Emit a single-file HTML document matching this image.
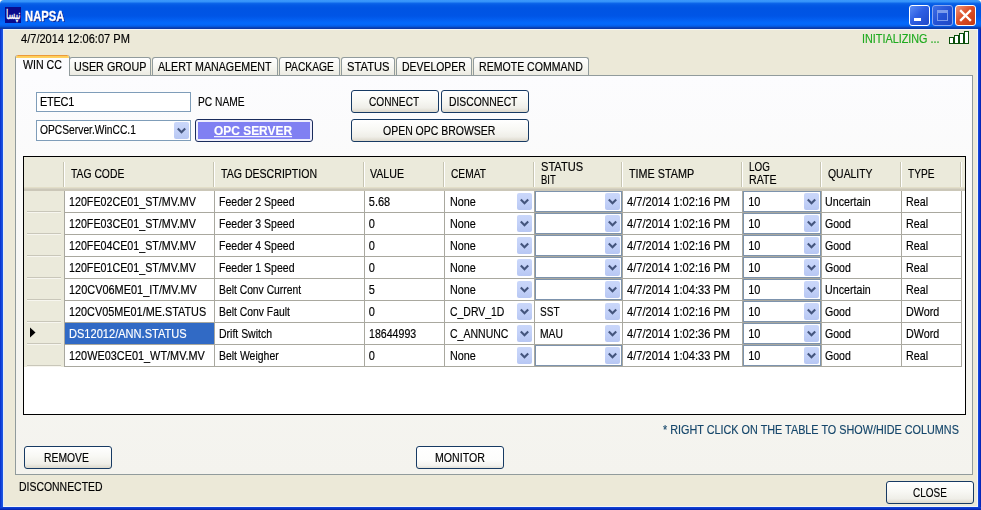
<!DOCTYPE html>
<html><head><meta charset="utf-8"><title>NAPSA</title>
<style>
html,body{margin:0;padding:0;}
body{width:981px;height:510px;overflow:hidden;position:relative;background:#fff;font-family:"Liberation Sans", sans-serif;font-size:11px;}
.a{position:absolute;box-sizing:content-box;}
.t{position:absolute;white-space:pre;font-family:"Liberation Sans", sans-serif;-webkit-text-stroke:0.15px;}
</style></head><body>
<div class="a" style="left:0px;top:0px;width:981px;height:510px;background:#ece9d8;border-radius:4px 4px 0 0;overflow:hidden;"></div>
<div class="a" style="left:0px;top:0px;width:981px;height:29px;border-radius:4px 4px 0 0;background:linear-gradient(to bottom,#3c98fb 0px,#3391f9 2px,#0f68ea 3px,#045ae5 5px,#0054e3 8px,#0055e6 16px,#0360f2 20px,#0469fb 23px,#0465f6 25px,#0557dc 26.5px,#0a44bb 27.5px,#0a359f 29px);"></div>
<div class="a" style="left:0px;top:29px;width:3px;height:481px;background:linear-gradient(to right,#0a2ec8 0,#0d3ed8 1px,#1a52e0 2px,#2058e0 3px);"></div>
<div class="a" style="left:978px;top:29px;width:3px;height:481px;background:linear-gradient(to left,#061fa8 0,#0a30c8 1px,#0f40d8 2px,#1a4ede 3px);"></div>
<div class="a" style="left:0px;top:507px;width:981px;height:3px;background:linear-gradient(to bottom,#1448d8 0,#0a34c8 1.5px,#0622a8 3px);"></div>
<div class="a" style="left:3px;top:29px;width:973px;height:476px;border:1px solid #f3f5f8;border-left-color:#e3ecfb;"></div>
<div class="a" style="left:5px;top:7px;width:16px;height:16px;background:#0a0a8c;"><span style="position:absolute;left:1.2px;top:2.54px;white-space:pre;color:#fff;-webkit-text-stroke:0.25px #fff;font:10px/12px 'DejaVu Sans',sans-serif;transform-origin:0 9.46px;transform:scale(0.81,1.28);">نپسا</span></div>
<div class="a" style="left:909px;top:5px;width:19px;height:19px;border:1px solid #fff;border-radius:3px;background:linear-gradient(135deg,#5b8cf5 0%,#2e5fe3 45%,#1f48c8 100%);"><div style="position:absolute;left:4px;top:12px;width:7px;height:3px;background:#fff"></div></div>
<div class="a" style="left:932px;top:5px;width:19px;height:19px;border:1px solid #8aa8f0;border-radius:3px;background:linear-gradient(135deg,#3f6fe6 0%,#2553d6 50%,#1d47c6 100%);"><div style="position:absolute;left:4px;top:4px;width:9px;height:7px;border:1px solid #7d9cec;border-top:3px solid #7d9cec"></div></div>
<div class="a" style="left:955px;top:5px;width:19px;height:19px;border:1px solid #fff;border-radius:3px;background:linear-gradient(135deg,#f0957a 0%,#dc4f28 45%,#c63810 100%);"><svg width="19" height="19" style="position:absolute;left:0;top:0"><path d="M5 5 L14 14 M14 5 L5 14" stroke="#fff" stroke-width="2.4" stroke-linecap="square"/></svg></div>
<div class="a" style="left:949px;top:37px;width:3px;height:5px;border:1px solid #0b4f0b;background:#fff;"></div>
<div class="a" style="left:954px;top:35px;width:3px;height:7px;border:1px solid #0b4f0b;background:#fff;"></div>
<div class="a" style="left:959px;top:33px;width:3px;height:9px;border:1px solid #0b4f0b;background:#fff;"></div>
<div class="a" style="left:964px;top:31px;width:3px;height:11px;border:1px solid #0b4f0b;background:#fff;"></div>
<div class="a" style="left:15px;top:75px;width:956px;height:398px;border:1px solid #919b9c;background:linear-gradient(to bottom,#fcfcfe 0%,#fafaf9 30%,#f6f6f2 60%,#f4f3ee 100%);"></div>
<div class="a" style="left:69px;top:57px;width:80px;height:17px;border:1px solid #919b9c;border-bottom:none;border-radius:3px 3px 0 0;background:linear-gradient(to bottom,#ffffff 0%,#f7f7f2 50%,#ecebe2 100%);"></div>
<div class="a" style="left:152px;top:57px;width:124px;height:17px;border:1px solid #919b9c;border-bottom:none;border-radius:3px 3px 0 0;background:linear-gradient(to bottom,#ffffff 0%,#f7f7f2 50%,#ecebe2 100%);"></div>
<div class="a" style="left:279px;top:57px;width:59px;height:17px;border:1px solid #919b9c;border-bottom:none;border-radius:3px 3px 0 0;background:linear-gradient(to bottom,#ffffff 0%,#f7f7f2 50%,#ecebe2 100%);"></div>
<div class="a" style="left:341px;top:57px;width:52px;height:17px;border:1px solid #919b9c;border-bottom:none;border-radius:3px 3px 0 0;background:linear-gradient(to bottom,#ffffff 0%,#f7f7f2 50%,#ecebe2 100%);"></div>
<div class="a" style="left:396px;top:57px;width:74px;height:17px;border:1px solid #919b9c;border-bottom:none;border-radius:3px 3px 0 0;background:linear-gradient(to bottom,#ffffff 0%,#f7f7f2 50%,#ecebe2 100%);"></div>
<div class="a" style="left:473px;top:57px;width:114px;height:17px;border:1px solid #919b9c;border-bottom:none;border-radius:3px 3px 0 0;background:linear-gradient(to bottom,#ffffff 0%,#f7f7f2 50%,#ecebe2 100%);"></div>
<div class="a" style="left:15px;top:55px;width:53px;height:21px;border:1px solid #919b9c;border-bottom:none;border-top:none;border-radius:3px 3px 0 0;background:#fcfcfe;overflow:hidden;"><div style="position:absolute;left:-1px;top:0;width:55px;height:3px;background:linear-gradient(to bottom,#eb9a3c 0,#eb9a3c 1px,#ffcc55 1px,#ffd366 3px);border-radius:3px 3px 0 0"></div></div>
<div class="a" style="left:36px;top:92px;width:153px;height:18px;border:1px solid #7f9db9;background:#fff;"></div>
<div class="a" style="left:36px;top:120px;width:153px;height:19px;border:1px solid #7f9db9;background:#fff;"></div>
<div class="a" style="left:174px;top:122px;width:15px;height:17px;border-radius:2px;background:linear-gradient(to bottom,#cad7fa 0%,#c3d1f8 50%,#b7c7f3 100%);"><svg width="15" height="17" style="position:absolute;left:0;top:0"><path d="M3.8 6.6000000000000005 L7.5 10.3 L11.2 6.6000000000000005" fill="none" stroke="#44557d" stroke-width="2.1"/></svg></div>
<div class="a" style="left:351px;top:90px;width:86px;height:21px;border:1px solid #173a63;border-radius:3px;background:linear-gradient(to bottom,#ffffff 0%,#f8f8f4 45%,#efeee8 80%,#dcd8cc 100%);"></div>
<div class="a" style="left:441px;top:90px;width:86px;height:21px;border:1px solid #173a63;border-radius:3px;background:linear-gradient(to bottom,#ffffff 0%,#f8f8f4 45%,#efeee8 80%,#dcd8cc 100%);"></div>
<div class="a" style="left:351px;top:119px;width:176px;height:21px;border:1px solid #173a63;border-radius:3px;background:linear-gradient(to bottom,#ffffff 0%,#f8f8f4 45%,#efeee8 80%,#dcd8cc 100%);"></div>
<div class="a" style="left:24px;top:446px;width:86px;height:21px;border:1px solid #173a63;border-radius:3px;background:linear-gradient(to bottom,#ffffff 0%,#f8f8f4 45%,#efeee8 80%,#dcd8cc 100%);"></div>
<div class="a" style="left:416px;top:446px;width:86px;height:21px;border:1px solid #173a63;border-radius:3px;background:linear-gradient(to bottom,#ffffff 0%,#fdfdfc 60%,#f3f2ee 88%,#e2dfd6 100%);"></div>
<div class="a" style="left:886px;top:481px;width:86px;height:21px;border:1px solid #173a63;border-radius:3px;background:linear-gradient(to bottom,#ffffff 0%,#f8f8f4 45%,#efeee8 80%,#dcd8cc 100%);"></div>
<div class="a" style="left:195px;top:119px;width:116px;height:21px;border:1px solid #1a2c5c;border-radius:3px;background:#eeeefc;"><div style="position:absolute;left:2px;top:2px;width:112px;height:17px;background:#8080f2"></div></div>
<div class="a" style="left:23px;top:156px;width:941px;height:257px;border:1px solid #000;background:#fff;"></div>
<div class="a" style="left:24px;top:157px;width:941px;height:34px;background:linear-gradient(to bottom,#ebeadb 0,#ebeadb 30px,#e2dec8 30px,#e2dec8 31px,#d6d2c2 31px,#d6d2c2 32px,#cbc7b8 32px,#cbc7b8 34px);"></div>
<div class="a" style="left:63px;top:162px;width:1px;height:25px;background:#c7c5b2;"></div>
<div class="a" style="left:64px;top:162px;width:1px;height:25px;background:#ffffff;"></div>
<div class="a" style="left:213px;top:162px;width:1px;height:25px;background:#c7c5b2;"></div>
<div class="a" style="left:214px;top:162px;width:1px;height:25px;background:#ffffff;"></div>
<div class="a" style="left:363px;top:162px;width:1px;height:25px;background:#c7c5b2;"></div>
<div class="a" style="left:364px;top:162px;width:1px;height:25px;background:#ffffff;"></div>
<div class="a" style="left:443px;top:162px;width:1px;height:25px;background:#c7c5b2;"></div>
<div class="a" style="left:444px;top:162px;width:1px;height:25px;background:#ffffff;"></div>
<div class="a" style="left:533px;top:162px;width:1px;height:25px;background:#c7c5b2;"></div>
<div class="a" style="left:534px;top:162px;width:1px;height:25px;background:#ffffff;"></div>
<div class="a" style="left:621px;top:162px;width:1px;height:25px;background:#c7c5b2;"></div>
<div class="a" style="left:622px;top:162px;width:1px;height:25px;background:#ffffff;"></div>
<div class="a" style="left:741px;top:162px;width:1px;height:25px;background:#c7c5b2;"></div>
<div class="a" style="left:742px;top:162px;width:1px;height:25px;background:#ffffff;"></div>
<div class="a" style="left:820px;top:162px;width:1px;height:25px;background:#c7c5b2;"></div>
<div class="a" style="left:821px;top:162px;width:1px;height:25px;background:#ffffff;"></div>
<div class="a" style="left:900px;top:162px;width:1px;height:25px;background:#c7c5b2;"></div>
<div class="a" style="left:901px;top:162px;width:1px;height:25px;background:#ffffff;"></div>
<div class="a" style="left:960px;top:162px;width:1px;height:25px;background:#c7c5b2;"></div>
<div class="a" style="left:961px;top:162px;width:1px;height:25px;background:#ffffff;"></div>
<div class="a" style="left:24px;top:191px;width:40px;height:176px;background:#ebeadb;"></div>
<div class="a" style="left:64px;top:191px;width:1px;height:176px;background:#a9a89f;"></div>
<div class="a" style="left:27px;top:211px;width:34px;height:1px;background:#c9c7ba;"></div>
<div class="a" style="left:27px;top:212px;width:34px;height:1px;background:#f7f6ef;"></div>
<div class="a" style="left:64px;top:212px;width:898px;height:1px;background:#a9a89f;"></div>
<div class="a" style="left:27px;top:233px;width:34px;height:1px;background:#c9c7ba;"></div>
<div class="a" style="left:27px;top:234px;width:34px;height:1px;background:#f7f6ef;"></div>
<div class="a" style="left:64px;top:234px;width:898px;height:1px;background:#a9a89f;"></div>
<div class="a" style="left:27px;top:255px;width:34px;height:1px;background:#c9c7ba;"></div>
<div class="a" style="left:27px;top:256px;width:34px;height:1px;background:#f7f6ef;"></div>
<div class="a" style="left:64px;top:256px;width:898px;height:1px;background:#a9a89f;"></div>
<div class="a" style="left:27px;top:277px;width:34px;height:1px;background:#c9c7ba;"></div>
<div class="a" style="left:27px;top:278px;width:34px;height:1px;background:#f7f6ef;"></div>
<div class="a" style="left:64px;top:278px;width:898px;height:1px;background:#a9a89f;"></div>
<div class="a" style="left:27px;top:299px;width:34px;height:1px;background:#c9c7ba;"></div>
<div class="a" style="left:27px;top:300px;width:34px;height:1px;background:#f7f6ef;"></div>
<div class="a" style="left:64px;top:300px;width:898px;height:1px;background:#a9a89f;"></div>
<div class="a" style="left:27px;top:321px;width:34px;height:1px;background:#c9c7ba;"></div>
<div class="a" style="left:27px;top:322px;width:34px;height:1px;background:#f7f6ef;"></div>
<div class="a" style="left:64px;top:322px;width:898px;height:1px;background:#a9a89f;"></div>
<div class="a" style="left:27px;top:343px;width:34px;height:1px;background:#c9c7ba;"></div>
<div class="a" style="left:27px;top:344px;width:34px;height:1px;background:#f7f6ef;"></div>
<div class="a" style="left:64px;top:344px;width:898px;height:1px;background:#a9a89f;"></div>
<div class="a" style="left:27px;top:365px;width:34px;height:1px;background:#c9c7ba;"></div>
<div class="a" style="left:27px;top:366px;width:34px;height:1px;background:#f7f6ef;"></div>
<div class="a" style="left:64px;top:366px;width:898px;height:1px;background:#a9a89f;"></div>
<div class="a" style="left:214px;top:191px;width:1px;height:176px;background:#a9a89f;"></div>
<div class="a" style="left:364px;top:191px;width:1px;height:176px;background:#a9a89f;"></div>
<div class="a" style="left:444px;top:191px;width:1px;height:176px;background:#a9a89f;"></div>
<div class="a" style="left:534px;top:191px;width:1px;height:176px;background:#a9a89f;"></div>
<div class="a" style="left:622px;top:191px;width:1px;height:176px;background:#a9a89f;"></div>
<div class="a" style="left:742px;top:191px;width:1px;height:176px;background:#a9a89f;"></div>
<div class="a" style="left:821px;top:191px;width:1px;height:176px;background:#a9a89f;"></div>
<div class="a" style="left:901px;top:191px;width:1px;height:176px;background:#a9a89f;"></div>
<div class="a" style="left:961px;top:191px;width:1px;height:176px;background:#a9a89f;"></div>
<div class="a" style="left:65px;top:323px;width:149px;height:21px;background:#316ac5;"></div>
<svg class="a" style="left:30px;top:327px" width="6" height="11"><path d="M0 0.5 L5.5 5.5 L0 10.5 Z" fill="#000"/></svg>
<div class="a" style="left:517px;top:193px;width:15px;height:17px;border-radius:2px;background:linear-gradient(to bottom,#cad7fa 0%,#c3d1f8 50%,#b7c7f3 100%);"><svg width="15" height="17" style="position:absolute;left:0;top:0"><path d="M3.8 6.6000000000000005 L7.5 10.3 L11.2 6.6000000000000005" fill="none" stroke="#44557d" stroke-width="2.1"/></svg></div>
<div class="a" style="left:535px;top:191px;width:85px;height:19px;border:1px solid #7d93ad;background:#fff;"></div>
<div class="a" style="left:605px;top:193px;width:15px;height:17px;border-radius:2px;background:linear-gradient(to bottom,#cad7fa 0%,#c3d1f8 50%,#b7c7f3 100%);"><svg width="15" height="17" style="position:absolute;left:0;top:0"><path d="M3.8 6.6000000000000005 L7.5 10.3 L11.2 6.6000000000000005" fill="none" stroke="#44557d" stroke-width="2.1"/></svg></div>
<div class="a" style="left:743px;top:191px;width:76px;height:19px;border:1px solid #7d93ad;background:#fff;"></div>
<div class="a" style="left:804px;top:193px;width:15px;height:17px;border-radius:2px;background:linear-gradient(to bottom,#cad7fa 0%,#c3d1f8 50%,#b7c7f3 100%);"><svg width="15" height="17" style="position:absolute;left:0;top:0"><path d="M3.8 6.6000000000000005 L7.5 10.3 L11.2 6.6000000000000005" fill="none" stroke="#44557d" stroke-width="2.1"/></svg></div>
<div class="a" style="left:517px;top:215px;width:15px;height:17px;border-radius:2px;background:linear-gradient(to bottom,#cad7fa 0%,#c3d1f8 50%,#b7c7f3 100%);"><svg width="15" height="17" style="position:absolute;left:0;top:0"><path d="M3.8 6.6000000000000005 L7.5 10.3 L11.2 6.6000000000000005" fill="none" stroke="#44557d" stroke-width="2.1"/></svg></div>
<div class="a" style="left:535px;top:213px;width:85px;height:19px;border:1px solid #7d93ad;background:#fff;"></div>
<div class="a" style="left:605px;top:215px;width:15px;height:17px;border-radius:2px;background:linear-gradient(to bottom,#cad7fa 0%,#c3d1f8 50%,#b7c7f3 100%);"><svg width="15" height="17" style="position:absolute;left:0;top:0"><path d="M3.8 6.6000000000000005 L7.5 10.3 L11.2 6.6000000000000005" fill="none" stroke="#44557d" stroke-width="2.1"/></svg></div>
<div class="a" style="left:743px;top:213px;width:76px;height:19px;border:1px solid #7d93ad;background:#fff;"></div>
<div class="a" style="left:804px;top:215px;width:15px;height:17px;border-radius:2px;background:linear-gradient(to bottom,#cad7fa 0%,#c3d1f8 50%,#b7c7f3 100%);"><svg width="15" height="17" style="position:absolute;left:0;top:0"><path d="M3.8 6.6000000000000005 L7.5 10.3 L11.2 6.6000000000000005" fill="none" stroke="#44557d" stroke-width="2.1"/></svg></div>
<div class="a" style="left:517px;top:237px;width:15px;height:17px;border-radius:2px;background:linear-gradient(to bottom,#cad7fa 0%,#c3d1f8 50%,#b7c7f3 100%);"><svg width="15" height="17" style="position:absolute;left:0;top:0"><path d="M3.8 6.6000000000000005 L7.5 10.3 L11.2 6.6000000000000005" fill="none" stroke="#44557d" stroke-width="2.1"/></svg></div>
<div class="a" style="left:535px;top:235px;width:85px;height:19px;border:1px solid #7d93ad;background:#fff;"></div>
<div class="a" style="left:605px;top:237px;width:15px;height:17px;border-radius:2px;background:linear-gradient(to bottom,#cad7fa 0%,#c3d1f8 50%,#b7c7f3 100%);"><svg width="15" height="17" style="position:absolute;left:0;top:0"><path d="M3.8 6.6000000000000005 L7.5 10.3 L11.2 6.6000000000000005" fill="none" stroke="#44557d" stroke-width="2.1"/></svg></div>
<div class="a" style="left:743px;top:235px;width:76px;height:19px;border:1px solid #7d93ad;background:#fff;"></div>
<div class="a" style="left:804px;top:237px;width:15px;height:17px;border-radius:2px;background:linear-gradient(to bottom,#cad7fa 0%,#c3d1f8 50%,#b7c7f3 100%);"><svg width="15" height="17" style="position:absolute;left:0;top:0"><path d="M3.8 6.6000000000000005 L7.5 10.3 L11.2 6.6000000000000005" fill="none" stroke="#44557d" stroke-width="2.1"/></svg></div>
<div class="a" style="left:517px;top:259px;width:15px;height:17px;border-radius:2px;background:linear-gradient(to bottom,#cad7fa 0%,#c3d1f8 50%,#b7c7f3 100%);"><svg width="15" height="17" style="position:absolute;left:0;top:0"><path d="M3.8 6.6000000000000005 L7.5 10.3 L11.2 6.6000000000000005" fill="none" stroke="#44557d" stroke-width="2.1"/></svg></div>
<div class="a" style="left:535px;top:257px;width:85px;height:19px;border:1px solid #7d93ad;background:#fff;"></div>
<div class="a" style="left:605px;top:259px;width:15px;height:17px;border-radius:2px;background:linear-gradient(to bottom,#cad7fa 0%,#c3d1f8 50%,#b7c7f3 100%);"><svg width="15" height="17" style="position:absolute;left:0;top:0"><path d="M3.8 6.6000000000000005 L7.5 10.3 L11.2 6.6000000000000005" fill="none" stroke="#44557d" stroke-width="2.1"/></svg></div>
<div class="a" style="left:743px;top:257px;width:76px;height:19px;border:1px solid #7d93ad;background:#fff;"></div>
<div class="a" style="left:804px;top:259px;width:15px;height:17px;border-radius:2px;background:linear-gradient(to bottom,#cad7fa 0%,#c3d1f8 50%,#b7c7f3 100%);"><svg width="15" height="17" style="position:absolute;left:0;top:0"><path d="M3.8 6.6000000000000005 L7.5 10.3 L11.2 6.6000000000000005" fill="none" stroke="#44557d" stroke-width="2.1"/></svg></div>
<div class="a" style="left:517px;top:281px;width:15px;height:17px;border-radius:2px;background:linear-gradient(to bottom,#cad7fa 0%,#c3d1f8 50%,#b7c7f3 100%);"><svg width="15" height="17" style="position:absolute;left:0;top:0"><path d="M3.8 6.6000000000000005 L7.5 10.3 L11.2 6.6000000000000005" fill="none" stroke="#44557d" stroke-width="2.1"/></svg></div>
<div class="a" style="left:535px;top:279px;width:85px;height:19px;border:1px solid #7d93ad;background:#fff;"></div>
<div class="a" style="left:605px;top:281px;width:15px;height:17px;border-radius:2px;background:linear-gradient(to bottom,#cad7fa 0%,#c3d1f8 50%,#b7c7f3 100%);"><svg width="15" height="17" style="position:absolute;left:0;top:0"><path d="M3.8 6.6000000000000005 L7.5 10.3 L11.2 6.6000000000000005" fill="none" stroke="#44557d" stroke-width="2.1"/></svg></div>
<div class="a" style="left:743px;top:279px;width:76px;height:19px;border:1px solid #7d93ad;background:#fff;"></div>
<div class="a" style="left:804px;top:281px;width:15px;height:17px;border-radius:2px;background:linear-gradient(to bottom,#cad7fa 0%,#c3d1f8 50%,#b7c7f3 100%);"><svg width="15" height="17" style="position:absolute;left:0;top:0"><path d="M3.8 6.6000000000000005 L7.5 10.3 L11.2 6.6000000000000005" fill="none" stroke="#44557d" stroke-width="2.1"/></svg></div>
<div class="a" style="left:517px;top:303px;width:15px;height:17px;border-radius:2px;background:linear-gradient(to bottom,#cad7fa 0%,#c3d1f8 50%,#b7c7f3 100%);"><svg width="15" height="17" style="position:absolute;left:0;top:0"><path d="M3.8 6.6000000000000005 L7.5 10.3 L11.2 6.6000000000000005" fill="none" stroke="#44557d" stroke-width="2.1"/></svg></div>
<div class="a" style="left:605px;top:303px;width:15px;height:17px;border-radius:2px;background:linear-gradient(to bottom,#cad7fa 0%,#c3d1f8 50%,#b7c7f3 100%);"><svg width="15" height="17" style="position:absolute;left:0;top:0"><path d="M3.8 6.6000000000000005 L7.5 10.3 L11.2 6.6000000000000005" fill="none" stroke="#44557d" stroke-width="2.1"/></svg></div>
<div class="a" style="left:743px;top:301px;width:76px;height:19px;border:1px solid #7d93ad;background:#fff;"></div>
<div class="a" style="left:804px;top:303px;width:15px;height:17px;border-radius:2px;background:linear-gradient(to bottom,#cad7fa 0%,#c3d1f8 50%,#b7c7f3 100%);"><svg width="15" height="17" style="position:absolute;left:0;top:0"><path d="M3.8 6.6000000000000005 L7.5 10.3 L11.2 6.6000000000000005" fill="none" stroke="#44557d" stroke-width="2.1"/></svg></div>
<div class="a" style="left:517px;top:325px;width:15px;height:17px;border-radius:2px;background:linear-gradient(to bottom,#cad7fa 0%,#c3d1f8 50%,#b7c7f3 100%);"><svg width="15" height="17" style="position:absolute;left:0;top:0"><path d="M3.8 6.6000000000000005 L7.5 10.3 L11.2 6.6000000000000005" fill="none" stroke="#44557d" stroke-width="2.1"/></svg></div>
<div class="a" style="left:605px;top:325px;width:15px;height:17px;border-radius:2px;background:linear-gradient(to bottom,#cad7fa 0%,#c3d1f8 50%,#b7c7f3 100%);"><svg width="15" height="17" style="position:absolute;left:0;top:0"><path d="M3.8 6.6000000000000005 L7.5 10.3 L11.2 6.6000000000000005" fill="none" stroke="#44557d" stroke-width="2.1"/></svg></div>
<div class="a" style="left:743px;top:323px;width:76px;height:19px;border:1px solid #7d93ad;background:#fff;"></div>
<div class="a" style="left:804px;top:325px;width:15px;height:17px;border-radius:2px;background:linear-gradient(to bottom,#cad7fa 0%,#c3d1f8 50%,#b7c7f3 100%);"><svg width="15" height="17" style="position:absolute;left:0;top:0"><path d="M3.8 6.6000000000000005 L7.5 10.3 L11.2 6.6000000000000005" fill="none" stroke="#44557d" stroke-width="2.1"/></svg></div>
<div class="a" style="left:517px;top:347px;width:15px;height:17px;border-radius:2px;background:linear-gradient(to bottom,#cad7fa 0%,#c3d1f8 50%,#b7c7f3 100%);"><svg width="15" height="17" style="position:absolute;left:0;top:0"><path d="M3.8 6.6000000000000005 L7.5 10.3 L11.2 6.6000000000000005" fill="none" stroke="#44557d" stroke-width="2.1"/></svg></div>
<div class="a" style="left:535px;top:345px;width:85px;height:19px;border:1px solid #7d93ad;background:#fff;"></div>
<div class="a" style="left:605px;top:347px;width:15px;height:17px;border-radius:2px;background:linear-gradient(to bottom,#cad7fa 0%,#c3d1f8 50%,#b7c7f3 100%);"><svg width="15" height="17" style="position:absolute;left:0;top:0"><path d="M3.8 6.6000000000000005 L7.5 10.3 L11.2 6.6000000000000005" fill="none" stroke="#44557d" stroke-width="2.1"/></svg></div>
<div class="a" style="left:743px;top:345px;width:76px;height:19px;border:1px solid #7d93ad;background:#fff;"></div>
<div class="a" style="left:804px;top:347px;width:15px;height:17px;border-radius:2px;background:linear-gradient(to bottom,#cad7fa 0%,#c3d1f8 50%,#b7c7f3 100%);"><svg width="15" height="17" style="position:absolute;left:0;top:0"><path d="M3.8 6.6000000000000005 L7.5 10.3 L11.2 6.6000000000000005" fill="none" stroke="#44557d" stroke-width="2.1"/></svg></div>
<div id="txt" style="position:absolute;left:0;top:0;width:981px;height:510px;will-change:transform;">
<span class="t" style="left:24.50px;top:7.90px;font-size:14px;line-height:16px;color:#fff;letter-spacing:0.000px;transform-origin:0 13.1px;transform:scale(0.806,1.0);font-weight:700;text-shadow:1px 1px 0 #0a1883;-webkit-text-stroke:0.3px #fff;">NAPSA</span>
<span class="t" style="left:21.00px;top:32.70px;font-size:11px;line-height:13px;color:#000;letter-spacing:0.000px;transform-origin:0 10.3px;transform:scale(1.006,1.13);">4/7/2014 12:06:07 PM</span>
<span class="t" style="left:861.52px;top:32.70px;font-size:11px;line-height:13px;color:#1faa1f;letter-spacing:0.000px;transform-origin:0 10.3px;transform:scale(0.983,1.13);">INITIALIZING ...</span>
<span class="t" style="left:23.00px;top:58.70px;font-size:11px;line-height:13px;color:#000;letter-spacing:0.000px;transform-origin:0 10.3px;transform:scale(0.966,1.13);">WIN CC</span>
<span class="t" style="left:74.40px;top:60.70px;font-size:11px;line-height:13px;color:#000;letter-spacing:0.000px;transform-origin:0 10.3px;transform:scale(0.978,1.13);">USER GROUP</span>
<span class="t" style="left:158.00px;top:60.70px;font-size:11px;line-height:13px;color:#000;letter-spacing:0.000px;transform-origin:0 10.3px;transform:scale(0.971,1.13);">ALERT MANAGEMENT</span>
<span class="t" style="left:285.00px;top:60.70px;font-size:11px;line-height:13px;color:#000;letter-spacing:0.000px;transform-origin:0 10.3px;transform:scale(0.932,1.13);">PACKAGE</span>
<span class="t" style="left:347.30px;top:60.70px;font-size:11px;line-height:13px;color:#000;letter-spacing:0.000px;transform-origin:0 10.3px;transform:scale(1.019,1.13);">STATUS</span>
<span class="t" style="left:402.40px;top:60.70px;font-size:11px;line-height:13px;color:#000;letter-spacing:0.000px;transform-origin:0 10.3px;transform:scale(0.948,1.13);">DEVELOPER</span>
<span class="t" style="left:479.40px;top:60.70px;font-size:11px;line-height:13px;color:#000;letter-spacing:0.000px;transform-origin:0 10.3px;transform:scale(0.960,1.13);">REMOTE COMMAND</span>
<span class="t" style="left:39.90px;top:95.70px;font-size:11px;line-height:13px;color:#000;letter-spacing:-0.250px;transform-origin:0 10.3px;transform:scale(1.000,1.13);">ETEC1</span>
<span class="t" style="left:197.70px;top:95.70px;font-size:11px;line-height:13px;color:#000;letter-spacing:0.000px;transform-origin:0 10.3px;transform:scale(0.930,1.13);">PC NAME</span>
<span class="t" style="left:40.00px;top:123.70px;font-size:11px;line-height:13px;color:#000;letter-spacing:0.000px;transform-origin:0 10.3px;transform:scale(0.934,1.13);">OPCServer.WinCC.1</span>
<span class="t" style="left:214.40px;top:124.70px;font-size:11px;line-height:13px;color:#fff;letter-spacing:0.000px;transform-origin:0 10.3px;transform:scale(1.085,1.13);font-weight:700;text-decoration:underline;">OPC SERVER</span>
<span class="t" style="left:368.70px;top:95.70px;font-size:11px;line-height:13px;color:#000;letter-spacing:0.000px;transform-origin:0 10.3px;transform:scale(0.922,1.13);">CONNECT</span>
<span class="t" style="left:449.30px;top:95.70px;font-size:11px;line-height:13px;color:#000;letter-spacing:0.000px;transform-origin:0 10.3px;transform:scale(0.941,1.13);">DISCONNECT</span>
<span class="t" style="left:382.60px;top:124.70px;font-size:11px;line-height:13px;color:#000;letter-spacing:0.000px;transform-origin:0 10.3px;transform:scale(0.953,1.13);">OPEN OPC BROWSER</span>
<span class="t" style="left:663.00px;top:423.70px;font-size:11px;line-height:13px;color:#15466a;letter-spacing:0.000px;transform-origin:0 10.3px;transform:scale(0.984,1.13);">* RIGHT CLICK ON THE TABLE TO SHOW/HIDE COLUMNS</span>
<span class="t" style="left:44.40px;top:451.70px;font-size:11px;line-height:13px;color:#000;letter-spacing:0.000px;transform-origin:0 10.3px;transform:scale(0.942,1.13);">REMOVE</span>
<span class="t" style="left:434.60px;top:451.70px;font-size:11px;line-height:13px;color:#000;letter-spacing:0.000px;transform-origin:0 10.3px;transform:scale(0.965,1.13);">MONITOR</span>
<span class="t" style="left:912.50px;top:486.70px;font-size:11px;line-height:13px;color:#000;letter-spacing:0.000px;transform-origin:0 10.3px;transform:scale(0.907,1.13);">CLOSE</span>
<span class="t" style="left:19.40px;top:480.70px;font-size:11px;line-height:13px;color:#000;letter-spacing:0.000px;transform-origin:0 10.3px;transform:scale(0.949,1.13);">DISCONNECTED</span>
<span class="t" style="left:70.80px;top:167.70px;font-size:11px;line-height:13px;color:#000;letter-spacing:0.000px;transform-origin:0 10.3px;transform:scale(0.941,1.13);">TAG CODE</span>
<span class="t" style="left:221.00px;top:167.70px;font-size:11px;line-height:13px;color:#000;letter-spacing:0.000px;transform-origin:0 10.3px;transform:scale(0.961,1.13);">TAG DESCRIPTION</span>
<span class="t" style="left:370.20px;top:167.70px;font-size:11px;line-height:13px;color:#000;letter-spacing:0.000px;transform-origin:0 10.3px;transform:scale(0.965,1.13);">VALUE</span>
<span class="t" style="left:450.60px;top:167.70px;font-size:11px;line-height:13px;color:#000;letter-spacing:0.000px;transform-origin:0 10.3px;transform:scale(0.927,1.13);">CEMAT</span>
<span class="t" style="left:540.50px;top:160.70px;font-size:11px;line-height:13px;color:#000;letter-spacing:0.000px;transform-origin:0 10.3px;transform:scale(1.009,1.13);">STATUS</span>
<span class="t" style="left:540.80px;top:173.70px;font-size:11px;line-height:13px;color:#000;letter-spacing:0.000px;transform-origin:0 10.3px;transform:scale(0.862,1.13);">BIT</span>
<span class="t" style="left:629.00px;top:167.70px;font-size:11px;line-height:13px;color:#000;letter-spacing:0.000px;transform-origin:0 10.3px;transform:scale(0.981,1.13);">TIME STAMP</span>
<span class="t" style="left:748.80px;top:160.70px;font-size:11px;line-height:13px;color:#000;letter-spacing:0.000px;transform-origin:0 10.3px;transform:scale(0.895,1.13);">LOG</span>
<span class="t" style="left:748.80px;top:173.70px;font-size:11px;line-height:13px;color:#000;letter-spacing:0.000px;transform-origin:0 10.3px;transform:scale(0.965,1.13);">RATE</span>
<span class="t" style="left:827.50px;top:167.70px;font-size:11px;line-height:13px;color:#000;letter-spacing:0.000px;transform-origin:0 10.3px;transform:scale(0.947,1.13);">QUALITY</span>
<span class="t" style="left:907.80px;top:167.70px;font-size:11px;line-height:13px;color:#000;letter-spacing:0.000px;transform-origin:0 10.3px;transform:scale(0.919,1.13);">TYPE</span>
<span class="t" style="left:69.00px;top:195.70px;font-size:11px;line-height:13px;color:#000;letter-spacing:0.000px;transform-origin:0 10.3px;transform:scale(0.973,1.13);">120FE02CE01_ST/MV.MV</span>
<span class="t" style="left:218.80px;top:195.70px;font-size:11px;line-height:13px;color:#000;letter-spacing:0.000px;transform-origin:0 10.3px;transform:scale(0.957,1.13);">Feeder 2 Speed</span>
<span class="t" style="left:368.80px;top:195.70px;font-size:11px;line-height:13px;color:#000;letter-spacing:0.000px;transform-origin:0 10.3px;transform:scale(1.000,1.13);">5.68</span>
<span class="t" style="left:449.50px;top:195.70px;font-size:11px;line-height:13px;color:#000;letter-spacing:0.000px;transform-origin:0 10.3px;transform:scale(0.982,1.13);">None</span>
<span class="t" style="left:626.50px;top:195.70px;font-size:11px;line-height:13px;color:#000;letter-spacing:0.000px;transform-origin:0 10.3px;transform:scale(1.009,1.13);">4/7/2014 1:02:16 PM</span>
<span class="t" style="left:748.20px;top:195.70px;font-size:11px;line-height:13px;color:#000;letter-spacing:0.000px;transform-origin:0 10.3px;transform:scale(1.000,1.13);">10</span>
<span class="t" style="left:825.40px;top:195.70px;font-size:11px;line-height:13px;color:#000;letter-spacing:0.000px;transform-origin:0 10.3px;transform:scale(0.971,1.13);">Uncertain</span>
<span class="t" style="left:905.80px;top:195.70px;font-size:11px;line-height:13px;color:#000;letter-spacing:0.000px;transform-origin:0 10.3px;transform:scale(0.974,1.13);">Real</span>
<span class="t" style="left:69.00px;top:217.70px;font-size:11px;line-height:13px;color:#000;letter-spacing:0.000px;transform-origin:0 10.3px;transform:scale(0.973,1.13);">120FE03CE01_ST/MV.MV</span>
<span class="t" style="left:218.80px;top:217.70px;font-size:11px;line-height:13px;color:#000;letter-spacing:0.000px;transform-origin:0 10.3px;transform:scale(0.957,1.13);">Feeder 3 Speed</span>
<span class="t" style="left:368.80px;top:217.70px;font-size:11px;line-height:13px;color:#000;letter-spacing:0.000px;transform-origin:0 10.3px;transform:scale(1.000,1.13);">0</span>
<span class="t" style="left:449.50px;top:217.70px;font-size:11px;line-height:13px;color:#000;letter-spacing:0.000px;transform-origin:0 10.3px;transform:scale(0.982,1.13);">None</span>
<span class="t" style="left:626.50px;top:217.70px;font-size:11px;line-height:13px;color:#000;letter-spacing:0.000px;transform-origin:0 10.3px;transform:scale(1.009,1.13);">4/7/2014 1:02:16 PM</span>
<span class="t" style="left:748.20px;top:217.70px;font-size:11px;line-height:13px;color:#000;letter-spacing:0.000px;transform-origin:0 10.3px;transform:scale(1.000,1.13);">10</span>
<span class="t" style="left:825.40px;top:217.70px;font-size:11px;line-height:13px;color:#000;letter-spacing:0.000px;transform-origin:0 10.3px;transform:scale(0.959,1.13);">Good</span>
<span class="t" style="left:905.80px;top:217.70px;font-size:11px;line-height:13px;color:#000;letter-spacing:0.000px;transform-origin:0 10.3px;transform:scale(0.974,1.13);">Real</span>
<span class="t" style="left:69.00px;top:239.70px;font-size:11px;line-height:13px;color:#000;letter-spacing:0.000px;transform-origin:0 10.3px;transform:scale(0.973,1.13);">120FE04CE01_ST/MV.MV</span>
<span class="t" style="left:218.80px;top:239.70px;font-size:11px;line-height:13px;color:#000;letter-spacing:0.000px;transform-origin:0 10.3px;transform:scale(0.957,1.13);">Feeder 4 Speed</span>
<span class="t" style="left:368.80px;top:239.70px;font-size:11px;line-height:13px;color:#000;letter-spacing:0.000px;transform-origin:0 10.3px;transform:scale(1.000,1.13);">0</span>
<span class="t" style="left:449.50px;top:239.70px;font-size:11px;line-height:13px;color:#000;letter-spacing:0.000px;transform-origin:0 10.3px;transform:scale(0.982,1.13);">None</span>
<span class="t" style="left:626.50px;top:239.70px;font-size:11px;line-height:13px;color:#000;letter-spacing:0.000px;transform-origin:0 10.3px;transform:scale(1.009,1.13);">4/7/2014 1:02:16 PM</span>
<span class="t" style="left:748.20px;top:239.70px;font-size:11px;line-height:13px;color:#000;letter-spacing:0.000px;transform-origin:0 10.3px;transform:scale(1.000,1.13);">10</span>
<span class="t" style="left:825.40px;top:239.70px;font-size:11px;line-height:13px;color:#000;letter-spacing:0.000px;transform-origin:0 10.3px;transform:scale(0.959,1.13);">Good</span>
<span class="t" style="left:905.80px;top:239.70px;font-size:11px;line-height:13px;color:#000;letter-spacing:0.000px;transform-origin:0 10.3px;transform:scale(0.974,1.13);">Real</span>
<span class="t" style="left:69.00px;top:261.70px;font-size:11px;line-height:13px;color:#000;letter-spacing:0.000px;transform-origin:0 10.3px;transform:scale(0.973,1.13);">120FE01CE01_ST/MV.MV</span>
<span class="t" style="left:218.80px;top:261.70px;font-size:11px;line-height:13px;color:#000;letter-spacing:0.000px;transform-origin:0 10.3px;transform:scale(0.957,1.13);">Feeder 1 Speed</span>
<span class="t" style="left:368.80px;top:261.70px;font-size:11px;line-height:13px;color:#000;letter-spacing:0.000px;transform-origin:0 10.3px;transform:scale(1.000,1.13);">0</span>
<span class="t" style="left:449.50px;top:261.70px;font-size:11px;line-height:13px;color:#000;letter-spacing:0.000px;transform-origin:0 10.3px;transform:scale(0.982,1.13);">None</span>
<span class="t" style="left:626.50px;top:261.70px;font-size:11px;line-height:13px;color:#000;letter-spacing:0.000px;transform-origin:0 10.3px;transform:scale(1.009,1.13);">4/7/2014 1:02:16 PM</span>
<span class="t" style="left:748.20px;top:261.70px;font-size:11px;line-height:13px;color:#000;letter-spacing:0.000px;transform-origin:0 10.3px;transform:scale(1.000,1.13);">10</span>
<span class="t" style="left:825.40px;top:261.70px;font-size:11px;line-height:13px;color:#000;letter-spacing:0.000px;transform-origin:0 10.3px;transform:scale(0.959,1.13);">Good</span>
<span class="t" style="left:905.80px;top:261.70px;font-size:11px;line-height:13px;color:#000;letter-spacing:0.000px;transform-origin:0 10.3px;transform:scale(0.974,1.13);">Real</span>
<span class="t" style="left:69.00px;top:283.70px;font-size:11px;line-height:13px;color:#000;letter-spacing:0.000px;transform-origin:0 10.3px;transform:scale(0.994,1.13);">120CV06ME01_IT/MV.MV</span>
<span class="t" style="left:218.80px;top:283.70px;font-size:11px;line-height:13px;color:#000;letter-spacing:0.000px;transform-origin:0 10.3px;transform:scale(0.939,1.13);">Belt Conv Current</span>
<span class="t" style="left:368.80px;top:283.70px;font-size:11px;line-height:13px;color:#000;letter-spacing:0.000px;transform-origin:0 10.3px;transform:scale(1.000,1.13);">5</span>
<span class="t" style="left:449.50px;top:283.70px;font-size:11px;line-height:13px;color:#000;letter-spacing:0.000px;transform-origin:0 10.3px;transform:scale(0.982,1.13);">None</span>
<span class="t" style="left:626.50px;top:283.70px;font-size:11px;line-height:13px;color:#000;letter-spacing:0.000px;transform-origin:0 10.3px;transform:scale(1.009,1.13);">4/7/2014 1:04:33 PM</span>
<span class="t" style="left:748.20px;top:283.70px;font-size:11px;line-height:13px;color:#000;letter-spacing:0.000px;transform-origin:0 10.3px;transform:scale(1.000,1.13);">10</span>
<span class="t" style="left:825.40px;top:283.70px;font-size:11px;line-height:13px;color:#000;letter-spacing:0.000px;transform-origin:0 10.3px;transform:scale(0.971,1.13);">Uncertain</span>
<span class="t" style="left:905.80px;top:283.70px;font-size:11px;line-height:13px;color:#000;letter-spacing:0.000px;transform-origin:0 10.3px;transform:scale(0.974,1.13);">Real</span>
<span class="t" style="left:69.00px;top:305.70px;font-size:11px;line-height:13px;color:#000;letter-spacing:0.000px;transform-origin:0 10.3px;transform:scale(0.987,1.13);">120CV05ME01/ME.STATUS</span>
<span class="t" style="left:218.80px;top:305.70px;font-size:11px;line-height:13px;color:#000;letter-spacing:0.000px;transform-origin:0 10.3px;transform:scale(0.942,1.13);">Belt Conv Fault</span>
<span class="t" style="left:368.80px;top:305.70px;font-size:11px;line-height:13px;color:#000;letter-spacing:0.000px;transform-origin:0 10.3px;transform:scale(1.000,1.13);">0</span>
<span class="t" style="left:449.50px;top:305.70px;font-size:11px;line-height:13px;color:#000;letter-spacing:0.000px;transform-origin:0 10.3px;transform:scale(0.949,1.13);">C_DRV_1D</span>
<span class="t" style="left:539.50px;top:305.70px;font-size:11px;line-height:13px;color:#000;letter-spacing:0.000px;transform-origin:0 10.3px;transform:scale(0.914,1.13);">SST</span>
<span class="t" style="left:626.50px;top:305.70px;font-size:11px;line-height:13px;color:#000;letter-spacing:0.000px;transform-origin:0 10.3px;transform:scale(1.009,1.13);">4/7/2014 1:02:16 PM</span>
<span class="t" style="left:748.20px;top:305.70px;font-size:11px;line-height:13px;color:#000;letter-spacing:0.000px;transform-origin:0 10.3px;transform:scale(1.000,1.13);">10</span>
<span class="t" style="left:825.40px;top:305.70px;font-size:11px;line-height:13px;color:#000;letter-spacing:0.000px;transform-origin:0 10.3px;transform:scale(0.959,1.13);">Good</span>
<span class="t" style="left:905.80px;top:305.70px;font-size:11px;line-height:13px;color:#000;letter-spacing:0.000px;transform-origin:0 10.3px;transform:scale(0.979,1.13);">DWord</span>
<span class="t" style="left:69.00px;top:327.70px;font-size:11px;line-height:13px;color:#fff;letter-spacing:0.000px;transform-origin:0 10.3px;transform:scale(1.006,1.13);">DS12012/ANN.STATUS</span>
<span class="t" style="left:218.80px;top:327.70px;font-size:11px;line-height:13px;color:#000;letter-spacing:0.000px;transform-origin:0 10.3px;transform:scale(0.953,1.13);">Drift Switch</span>
<span class="t" style="left:368.80px;top:327.70px;font-size:11px;line-height:13px;color:#000;letter-spacing:0.000px;transform-origin:0 10.3px;transform:scale(0.965,1.13);">18644993</span>
<span class="t" style="left:449.50px;top:327.70px;font-size:11px;line-height:13px;color:#000;letter-spacing:0.000px;transform-origin:0 10.3px;transform:scale(0.956,1.13);">C_ANNUNC</span>
<span class="t" style="left:539.50px;top:327.70px;font-size:11px;line-height:13px;color:#000;letter-spacing:0.000px;transform-origin:0 10.3px;transform:scale(0.939,1.13);">MAU</span>
<span class="t" style="left:626.50px;top:327.70px;font-size:11px;line-height:13px;color:#000;letter-spacing:0.000px;transform-origin:0 10.3px;transform:scale(1.009,1.13);">4/7/2014 1:02:36 PM</span>
<span class="t" style="left:748.20px;top:327.70px;font-size:11px;line-height:13px;color:#000;letter-spacing:0.000px;transform-origin:0 10.3px;transform:scale(1.000,1.13);">10</span>
<span class="t" style="left:825.40px;top:327.70px;font-size:11px;line-height:13px;color:#000;letter-spacing:0.000px;transform-origin:0 10.3px;transform:scale(0.959,1.13);">Good</span>
<span class="t" style="left:905.80px;top:327.70px;font-size:11px;line-height:13px;color:#000;letter-spacing:0.000px;transform-origin:0 10.3px;transform:scale(0.979,1.13);">DWord</span>
<span class="t" style="left:69.00px;top:349.70px;font-size:11px;line-height:13px;color:#000;letter-spacing:0.000px;transform-origin:0 10.3px;transform:scale(0.990,1.13);">120WE03CE01_WT/MV.MV</span>
<span class="t" style="left:218.80px;top:349.70px;font-size:11px;line-height:13px;color:#000;letter-spacing:0.000px;transform-origin:0 10.3px;transform:scale(0.951,1.13);">Belt Weigher</span>
<span class="t" style="left:368.80px;top:349.70px;font-size:11px;line-height:13px;color:#000;letter-spacing:0.000px;transform-origin:0 10.3px;transform:scale(1.000,1.13);">0</span>
<span class="t" style="left:449.50px;top:349.70px;font-size:11px;line-height:13px;color:#000;letter-spacing:0.000px;transform-origin:0 10.3px;transform:scale(0.982,1.13);">None</span>
<span class="t" style="left:626.50px;top:349.70px;font-size:11px;line-height:13px;color:#000;letter-spacing:0.000px;transform-origin:0 10.3px;transform:scale(1.009,1.13);">4/7/2014 1:04:33 PM</span>
<span class="t" style="left:748.20px;top:349.70px;font-size:11px;line-height:13px;color:#000;letter-spacing:0.000px;transform-origin:0 10.3px;transform:scale(1.000,1.13);">10</span>
<span class="t" style="left:825.40px;top:349.70px;font-size:11px;line-height:13px;color:#000;letter-spacing:0.000px;transform-origin:0 10.3px;transform:scale(0.959,1.13);">Good</span>
<span class="t" style="left:905.80px;top:349.70px;font-size:11px;line-height:13px;color:#000;letter-spacing:0.000px;transform-origin:0 10.3px;transform:scale(0.974,1.13);">Real</span>
</div>
</body></html>
